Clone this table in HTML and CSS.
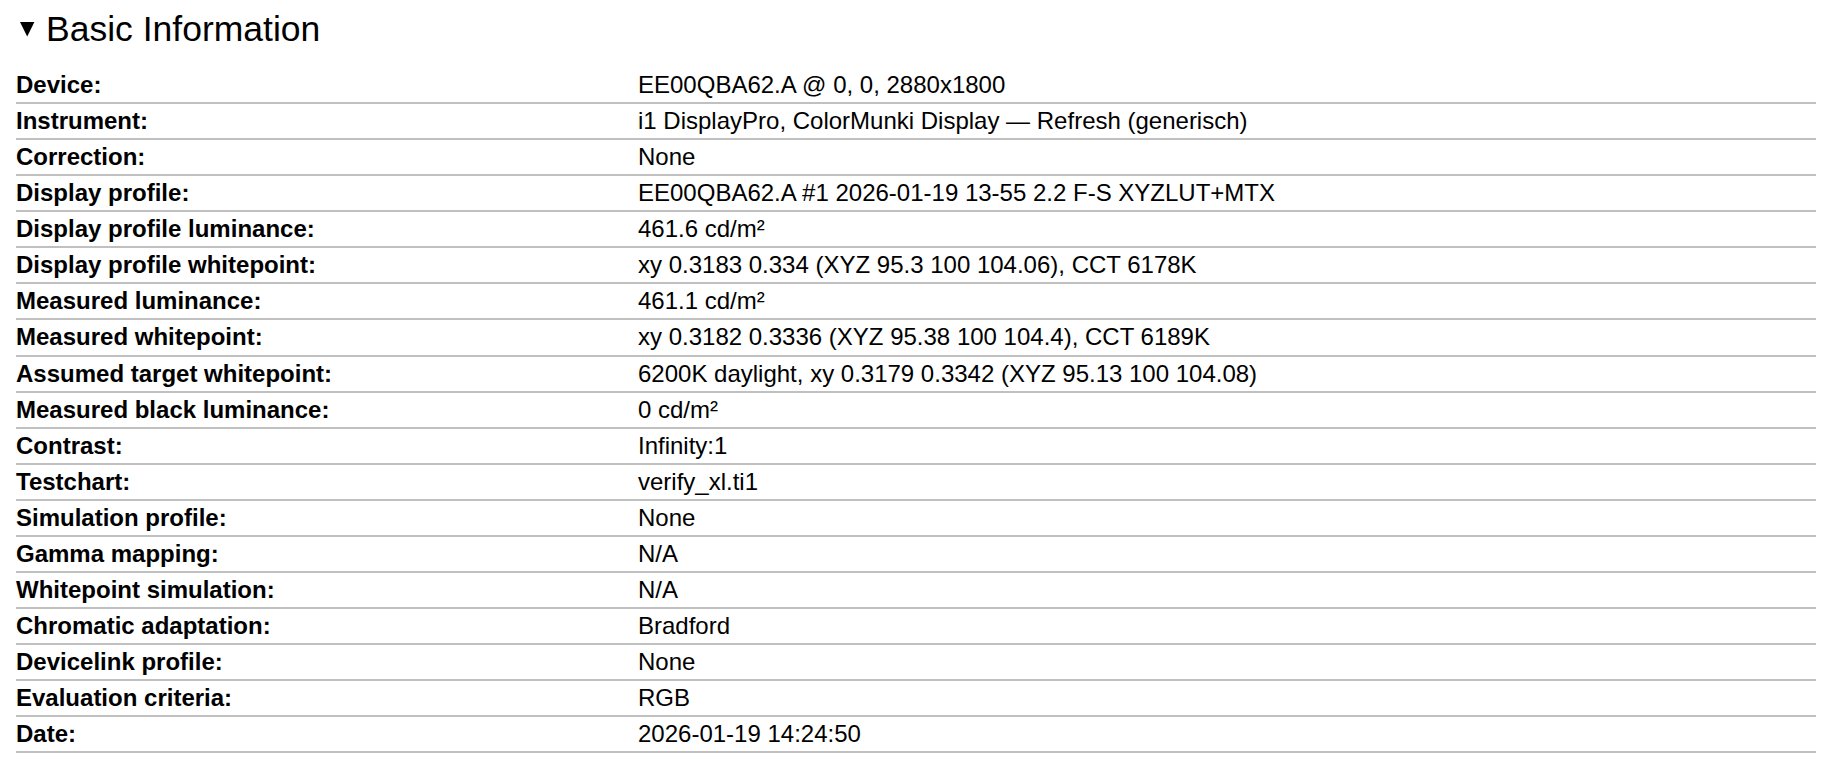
FILE: index.html
```html
<!DOCTYPE html>
<html>
<head>
<meta charset="utf-8">
<title>Basic Information</title>
<link rel="stylesheet" href="styles.css">
</head>
<body>
<section class="report">
  <h2 class="section-title"><svg class="marker" width="16" height="16" viewBox="0 0 16 16"><polygon points="0,0 14.4,0 7.2,14.4" fill="#000"/></svg><span>Basic Information</span></h2>
  <table class="info">
    <tbody>
      <tr><td class="label">Device:</td><td class="value">EE00QBA62.A @ 0, 0, 2880x1800</td></tr>
      <tr><td class="label">Instrument:</td><td class="value">i1 DisplayPro, ColorMunki Display — Refresh (generisch)</td></tr>
      <tr><td class="label">Correction:</td><td class="value">None</td></tr>
      <tr><td class="label">Display profile:</td><td class="value">EE00QBA62.A #1 2026-01-19 13-55 2.2 F-S XYZLUT+MTX</td></tr>
      <tr><td class="label">Display profile luminance:</td><td class="value">461.6 cd/m²</td></tr>
      <tr><td class="label">Display profile whitepoint:</td><td class="value">xy 0.3183 0.334 (XYZ 95.3 100 104.06), CCT 6178K</td></tr>
      <tr><td class="label">Measured luminance:</td><td class="value">461.1 cd/m²</td></tr>
      <tr><td class="label">Measured whitepoint:</td><td class="value">xy 0.3182 0.3336 (XYZ 95.38 100 104.4), CCT 6189K</td></tr>
      <tr><td class="label">Assumed target whitepoint:</td><td class="value">6200K daylight, xy 0.3179 0.3342 (XYZ 95.13 100 104.08)</td></tr>
      <tr><td class="label">Measured black luminance:</td><td class="value">0 cd/m²</td></tr>
      <tr><td class="label">Contrast:</td><td class="value">Infinity:1</td></tr>
      <tr><td class="label">Testchart:</td><td class="value">verify_xl.ti1</td></tr>
      <tr><td class="label">Simulation profile:</td><td class="value">None</td></tr>
      <tr><td class="label">Gamma mapping:</td><td class="value">N/A</td></tr>
      <tr><td class="label">Whitepoint simulation:</td><td class="value">N/A</td></tr>
      <tr><td class="label">Chromatic adaptation:</td><td class="value">Bradford</td></tr>
      <tr><td class="label">Devicelink profile:</td><td class="value">None</td></tr>
      <tr><td class="label">Evaluation criteria:</td><td class="value">RGB</td></tr>
      <tr><td class="label">Date:</td><td class="value">2026-01-19 14:24:50</td></tr>
    </tbody>
  </table>
</section>
</body>
</html>
```
FILE: styles.css
```css
html, body {
  margin: 0;
  padding: 0;
  background: #fff;
}

body {
  font-family: "Liberation Sans", Arial, sans-serif;
  color: #000;
}

.report {
  padding: 0 0 0 16px;
}

.section-title {
  margin: 9px 0 19px 0;
  font-size: 35.5px;
  line-height: 40px;
  font-weight: normal;
  display: flex;
  align-items: flex-start;
}

.marker {
  margin: 13px 0 0 4px;
  width: 16px;
  height: 16px;
  flex: none;
}

.section-title span {
  margin-left: 10px;
}

.info {
  width: 1800px;
  border-collapse: separate;
  border-spacing: 0;
  font-size: 24px;
  line-height: 28.06px;
}

.info td {
  padding: 3px 0 3px 0;
  border-bottom: 2px solid #c0c0c0;
  vertical-align: top;
  white-space: nowrap;
}

.info .label {
  width: 622px;
  font-weight: bold;
}

.info .value {
  font-weight: normal;
}
```
